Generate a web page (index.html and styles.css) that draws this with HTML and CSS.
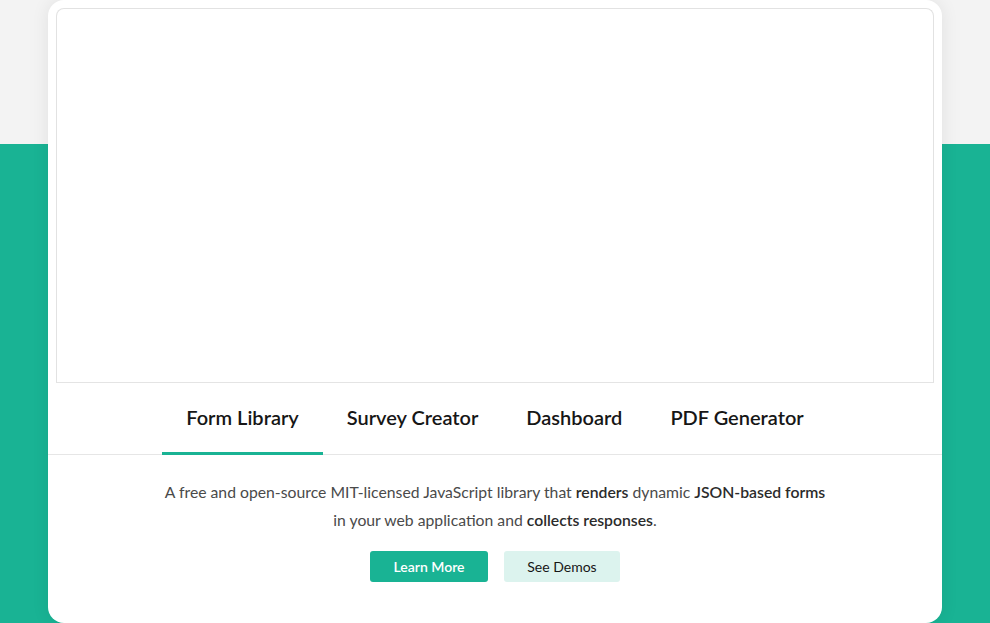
FILE: index.html
```html
<!DOCTYPE html>
<html>
<head>
<meta charset="utf-8">
<link rel="stylesheet" href="styles.css">
</head>
<body>
<div class="page">
  <div class="card">
    <div class="preview"></div>
    <nav class="tabs">
      <a class="tab active">Form Library</a>
      <a class="tab">Survey Creator</a>
      <a class="tab">Dashboard</a>
      <a class="tab">PDF Generator</a>
    </nav>
    <div class="content">
      <p class="desc">A free and open-source MIT-licensed JavaScript library that <b>renders</b> dynamic <b>JSON-based forms</b><br>in your web application and <b>collects responses</b>.</p>
      <div class="buttons">
        <a class="btn primary">Learn More</a>
        <a class="btn secondary">See Demos</a>
      </div>
    </div>
  </div>
</div>
</body>
</html>
```

FILE: styles.css
```css
html, body {
  margin: 0;
  padding: 0;
}
body {
  font-family: Lato, "Open Sans", sans-serif;
  background: #19b394;
}
.page {
  height: 623px;
  overflow: hidden;
  background: linear-gradient(to bottom, #f3f3f3 0, #f3f3f3 144px, #19b394 144px);
}
.card {
  width: 894px;
  margin: 0 auto;
  background: #fff;
  border-radius: 16px;
  box-shadow: 0 0 18px rgba(0, 0, 0, 0.08);
  padding: 8px 8px 0;
  box-sizing: border-box;
  height: 623px;
  display: flex;
  flex-direction: column;
}
.preview {
  height: 375px;
  border: 1px solid #e2e2e2;
  border-bottom-color: #e4e4e4;
  border-radius: 8px 8px 0 0;
  box-sizing: border-box;
}
.tabs {
  display: flex;
  justify-content: center;
  margin: 0 -8px;
  border-bottom: 1px solid #e6e6e6;
  height: 72px;
  box-sizing: border-box;
}
.tab {
  display: flex;
  align-items: center;
  padding: 0 24px 1px;
  font-size: 20px;
  font-weight: 600;
  color: #161616;
  border-bottom: 3px solid transparent;
  margin-bottom: -1px;
}
.tab.active {
  border-bottom-color: #19b394;
}
.content {
  display: flex;
  flex-direction: column;
  align-items: center;
  padding-top: 23px;
}
.desc {
  margin: 0;
  font-size: 15.75px;
  line-height: 28px;
  color: #4a4a4a;
  text-align: center;
}
.desc b {
  color: #2b2b2b;
  font-weight: 600;
}
.buttons {
  display: flex;
  gap: 16px;
  margin-top: 17px;
}
.btn {
  display: flex;
  align-items: center;
  justify-content: center;
  height: 31px;
  border-radius: 3px;
  font-size: 14px;
  font-weight: 600;
}
.primary {
  width: 118px;
  background: #19b394;
  color: #fff;
}
.secondary {
  width: 116px;
  background: #dcf3ee;
  color: #161616;
  font-weight: 400;
}
```
